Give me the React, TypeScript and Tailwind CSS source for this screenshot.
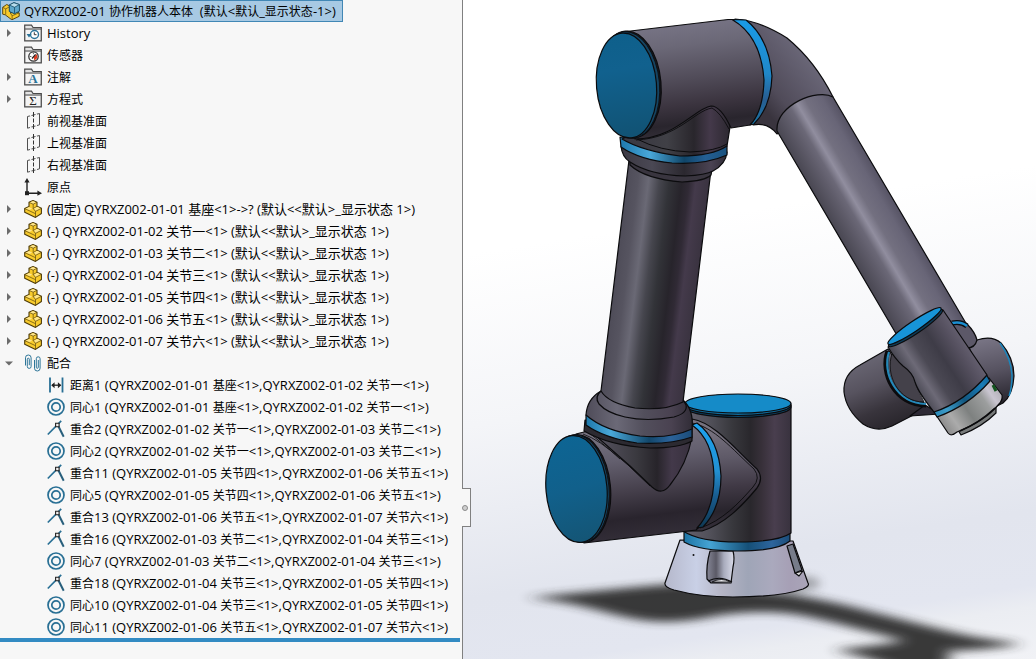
import React from "react";

type IconProps = { children: React.ReactNode };

const Icon = ({ children }: IconProps) => (
  <svg viewBox="0 0 18 18" className="size-[18px] shrink-0" fill="none" aria-hidden="true">
    {children}
  </svg>
);

const Folder = ({ children }: IconProps) => (
  <Icon>
    <path d="M.7 16.8V1.2h6.8l1.5 2.3h8.3v13.3z" fill="#e4e4e4" stroke="#4a4a4a" strokeWidth="1.2" />
    <path d="M1 5h16" stroke="#4a4a4a" />
    <path d="M2 6h14v9.800H2z" fill="#f4f4f4" />
    {children}
  </Icon>
);

const HistoryIcon = () => (
  <Folder>
    <circle cx="10.5" cy="10.5" r="4" fill="#fff" stroke="#2b7399" strokeWidth="1.400" />
    <path d="M10.300 8.300v2.400h2.200" stroke="#333" />
    <path d="M2.600 10h5L5 13.400z" fill="#2b7399" />
  </Folder>
);

const SensorIcon = () => (
  <Folder>
    <circle cx="9.5" cy="10.5" r="4.700" fill="#fff" stroke="#333" strokeWidth="1.300" />
    <path d="M9.500 11l3.500-3 .4 4-3 2.400z" fill="#df3b20" />
    <path d="M8 12.500l3.600-4.200" stroke="#222" strokeWidth="1.200" />
    <path d="M6 10.500h1.400M9.400 6.800V8.200" stroke="#666" />
  </Folder>
);

const AnnotationIcon = () => (
  <Folder>
    <text x="9" y="15" textAnchor="middle" fill="#2b7399" className="font-['Liberation_Serif',serif] text-[13px] font-bold">
      A
    </text>
  </Folder>
);

const EquationIcon = () => (
  <Folder>
    <text x="9" y="15" textAnchor="middle" fill="#222" className="font-['Liberation_Serif',serif] text-[13px]">
      Σ
    </text>
  </Folder>
);

const PlaneIcon = () => (
  <Icon>
    <path d="M3.500 4.500l12-3v11.300l-12 3.400z" stroke="#4f4f4f" strokeWidth="1" />
    <path d="M9.500 0v18" stroke="#333" strokeDasharray="5 1.500 4 1.500" />
    <path d="M6 3.900l1.500-.4M11.500 2.500l1.500-.4M6 15.500l1.500-.4M11.500 14l1.500-.4" stroke="#f7f7f7" strokeWidth="2" />
  </Icon>
);

const OriginIcon = () => (
  <Icon>
    <path d="M3 15.200V3M3 15.200h12" stroke="#222" strokeWidth="1.400" />
    <path d="M3 0l2.600 4.600H.4zM18 15.200l-4.600-2.600v5.200z" fill="#222" />
    <path d="M1 13.200h4v4H1z" fill="#222" />
  </Icon>
);

const PartIcon = () => (
  <Icon>
    <path
      d="M5 2.300L9 .6l4 1.600v4l4.400 2v5.300l-5.900 3.900L.7 12.200V8.600L5 6.600z"
      fill="#f8cb2c"
      stroke="#4d3b08"
      strokeWidth="1.100"
      strokeLinejoin="round"
    />
    <path d="M5.500 2.400L9 1.100l3.300 1.300-3.200 1.500zM9.400 8.500l3.800-1.700 3.600 1.600-5 2.500zM1.500 8.700L5 7l3.300 1.700L5.400 10z" fill="#ffe68a" />
    <path d="M5 2.400l4.200 1.800L13 2.200M9.200 4.200v4.300l2.300 2.900 5.900-3.100M11.500 11.400v5.800M.9 8.700l10.600 5" stroke="#5b470e" strokeWidth=".7" />
    <path d="M9.200 8.500L13 6.200" stroke="#5b470e" strokeWidth=".7" />
  </Icon>
);

const AssemblyIcon = () => (
  <Icon>
    <path
      d="M.7 5.300l4-2.800 3.800 1.800v6.900l3.700-1.900 5 1.600v3.400l-7.400 3.500-6.600-5-2.500-.6z"
      fill="#f8cb2c"
      stroke="#5b470e"
      strokeLinejoin="round"
    />
    <path d="M.7 5.300l3 1.600 4.800-2.600M3.700 6.900v5.700M8.500 11.200l1.600 2.600 7-3M10.100 13.800v4" stroke="#5b470e" strokeWidth=".7" />
    <path d="M7.300 3L11.900.7l5.500 1.900v6.600l-4.900 2.600-5.200-2.300z" fill="#5ea7cb" stroke="#174c66" strokeLinejoin="round" />
    <path d="M7.300 3l5.200 2.300 4.900-2.700L11.900.7z" fill="#b8dcec" stroke="#174c66" strokeWidth=".8" />
    <path d="M12.500 5.300v6.300" stroke="#174c66" strokeWidth=".8" />
  </Icon>
);

const MatesIcon = () => (
  <Icon>
    <path d="M1.500 11.500V3.800a2.800 2.800 0 015.600 0v8.700a1.900 1.900 0 01-3.800 0V5.200a1 1 0 012 0v6" stroke="#2e7699" />
    <path d="M10.500 6v8.200a2.800 2.800 0 005.600 0V4.700a1.900 1.900 0 00-3.800 0v8.600a1 1 0 002 0V6" stroke="#2e7699" />
  </Icon>
);

const DistanceIcon = () => (
  <Icon>
    <path d="M3 1.500v15M15.500 1.500v15" stroke="#286f94" strokeWidth="1.800" />
    <path d="M5 9.200h8.500" stroke="#222" strokeWidth="1.300" />
    <path d="M4.200 9.200l3.400-3v6zM14.300 9.200l-3.400-3v6z" fill="#222" />
  </Icon>
);

const ConcentricIcon = () => (
  <Icon>
    <circle cx="9" cy="9" r="8" stroke="#286f94" strokeWidth="1.700" />
    <circle cx="9" cy="9" r="4.200" stroke="#286f94" strokeWidth="1.700" />
  </Icon>
);

const CoincidentIcon = () => (
  <Icon>
    <path d="M.8 14.500L14.200.8" stroke="#286f94" strokeWidth="1.700" />
    <path d="M10.500 4.500l6.200 12.200" stroke="#285f7c" strokeWidth="2" />
    <path d="M8.600 3.200h3.500v3.500H8.600z" fill="#eee" stroke="#222" strokeWidth="1.100" />
  </Icon>
);

const folders = [
  { label: "History", icon: HistoryIcon, expandable: true },
  { label: "传感器", icon: SensorIcon, expandable: false },
  { label: "注解", icon: AnnotationIcon, expandable: true },
  { label: "方程式", icon: EquationIcon, expandable: true },
  { label: "前视基准面", icon: PlaneIcon, expandable: false },
  { label: "上视基准面", icon: PlaneIcon, expandable: false },
  { label: "右视基准面", icon: PlaneIcon, expandable: false },
  { label: "原点", icon: OriginIcon, expandable: false },
];

const parts = [
  "(固定) QYRXZ002-01-01 基座<1>->? (默认<<默认>_显示状态 1>)",
  "(-) QYRXZ002-01-02 关节一<1> (默认<<默认>_显示状态 1>)",
  "(-) QYRXZ002-01-03 关节二<1> (默认<<默认>_显示状态 1>)",
  "(-) QYRXZ002-01-04 关节三<1> (默认<<默认>_显示状态 1>)",
  "(-) QYRXZ002-01-05 关节四<1> (默认<<默认>_显示状态 1>)",
  "(-) QYRXZ002-01-06 关节五<1> (默认<<默认>_显示状态 1>)",
  "(-) QYRXZ002-01-07 关节六<1> (默认<<默认>_显示状态 1>)",
];

const mates = [
  { icon: DistanceIcon, label: "距离1 (QYRXZ002-01-01 基座<1>,QYRXZ002-01-02 关节一<1>)" },
  { icon: ConcentricIcon, label: "同心1 (QYRXZ002-01-01 基座<1>,QYRXZ002-01-02 关节一<1>)" },
  { icon: CoincidentIcon, label: "重合2 (QYRXZ002-01-02 关节一<1>,QYRXZ002-01-03 关节二<1>)" },
  { icon: ConcentricIcon, label: "同心2 (QYRXZ002-01-02 关节一<1>,QYRXZ002-01-03 关节二<1>)" },
  { icon: CoincidentIcon, label: "重合11 (QYRXZ002-01-05 关节四<1>,QYRXZ002-01-06 关节五<1>)" },
  { icon: ConcentricIcon, label: "同心5 (QYRXZ002-01-05 关节四<1>,QYRXZ002-01-06 关节五<1>)" },
  { icon: CoincidentIcon, label: "重合13 (QYRXZ002-01-06 关节五<1>,QYRXZ002-01-07 关节六<1>)" },
  { icon: CoincidentIcon, label: "重合16 (QYRXZ002-01-03 关节二<1>,QYRXZ002-01-04 关节三<1>)" },
  { icon: ConcentricIcon, label: "同心7 (QYRXZ002-01-03 关节二<1>,QYRXZ002-01-04 关节三<1>)" },
  { icon: CoincidentIcon, label: "重合18 (QYRXZ002-01-04 关节三<1>,QYRXZ002-01-05 关节四<1>)" },
  { icon: ConcentricIcon, label: "同心10 (QYRXZ002-01-04 关节三<1>,QYRXZ002-01-05 关节四<1>)" },
  { icon: ConcentricIcon, label: "同心11 (QYRXZ002-01-06 关节五<1>,QYRXZ002-01-07 关节六<1>)" },
];

// Chinese glyphs are set one step smaller than the Latin ones
const Label = ({ text }: { text: string }) => (
  <span className="whitespace-pre">
    {text.split(/([\u4e00-\u9fff]+)/).map((run, i) =>
      i % 2 ? (
        <span key={i} className="text-xs/none">
          {run}
        </span>
      ) : (
        run
      )
    )}
  </span>
);

const Expander = ({ open = false, name }: { open?: boolean; name: string }) => (
  <button type="button" aria-label={name} aria-expanded={open} className="flex h-[22px] w-6 shrink-0 items-center pl-1">
    <svg viewBox="0 0 10 10" className="size-[10px]" fill="#6b6b6b">
      {open ? <path d="M1 3.500h8L5 7.500z" /> : <path d="M3 1v8l4-4z" />}
    </svg>
  </button>
);

const FeatureTree = () => (
  <nav aria-label="FeatureManager">
    <button
      type="button"
      className="flex h-[22px] w-[343px] items-center gap-1 border border-[#4187b5] bg-[#a7c9e3] pl-px"
    >
      <AssemblyIcon />
      <Label text="QYRXZ002-01 协作机器人本体  (默认<默认_显示状态-1>)" />
    </button>
    <ul>
      {folders.map(({ label, icon: RowIcon, expandable }) => (
        <li key={label} className="flex h-[22px] items-center">
          {expandable ? <Expander name={label} /> : <span className="w-6" />}
          <RowIcon />
          <span className="pl-[5px]">
            <Label text={label} />
          </span>
        </li>
      ))}
      {parts.map((label) => (
        <li key={label} className="flex h-[22px] items-center">
          <Expander name={label} />
          <PartIcon />
          <span className="pl-[5px] whitespace-pre">{label}</span>
        </li>
      ))}
      <li>
        <div className="flex h-[22px] items-center">
          <Expander open name="配合" />
          <MatesIcon />
          <span className="pl-[5px]">
            <Label text="配合" />
          </span>
        </div>
        <ul>
          {mates.map(({ icon: MateIcon, label }) => (
            <li key={label} className="flex h-[22px] items-center gap-[5px] pl-[47px]">
              <MateIcon />
              <Label text={label} />
            </li>
          ))}
        </ul>
      </li>
    </ul>
    <div className="mr-[2px] h-1 bg-[#338bc3]" />
  </nav>
);

const Gradient = ({ id, from, to, stops }: { id: string; from: number[]; to: number[]; stops: [number, string][] }) => (
  <linearGradient id={id} gradientUnits="userSpaceOnUse" x1={from[0]} y1={from[1]} x2={to[0]} y2={to[1]}>
    {stops.map(([offset, color]) => (
      <stop key={offset} offset={offset} stopColor={color} />
    ))}
  </linearGradient>
);

const Robot = () => (
  <svg
    viewBox="463 0 573 659"
    preserveAspectRatio="xMidYMid meet"
    className="absolute inset-0 size-full"
    role="img"
    aria-label="协作机器人"
  >
    <defs>
      <filter id="soft" x="-10%" y="-50%" width="120%" height="200%">
        <feGaussianBlur stdDeviation="8 4" />
      </filter>
      <filter id="softer" x="-50%" y="-50%" width="200%" height="200%">
        <feGaussianBlur stdDeviation="5" />
      </filter>
      <Gradient id="shoulder" from={[684, 22]} to={[698, 136]} stops={[[0, "#777485"], [0.2, "#6b6877"], [0.5, "#504b58"], [0.72, "#3b343f"], [0.88, "#29252d"], [1, "#35313a"]]} />
      <Gradient id="elbow" from={[765, 110]} to={[825, 60]} stops={[[0, "#39343e"], [0.25, "#504b59"], [0.6, "#5f5b6b"], [1, "#706d7e"]]} />
      <Gradient id="forearm" from={[777, 131]} to={[833, 98]} stops={[[0, "#494752"], [0.25, "#605d6b"], [0.36, "#6b6877"], [0.48, "#918e9f"], [0.62, "#737080"], [0.85, "#686577"], [1, "#575465"]]} />
      <Gradient id="arm" from={[614, 280]} to={[696, 290]} stops={[[0, "#4e4c58"], [0.14, "#565460"], [0.27, "#6a6975"], [0.4, "#46464e"], [0.52, "#323338"], [0.67, "#27242b"], [0.76, "#302a35"], [0.84, "#443a4b"], [1, "#3a3340"]]} />
      <Gradient id="neck" from={[640, 130]} to={[730, 130]} stops={[[0, "#3b3a43"], [0.3, "#404046"], [0.6, "#29262c"], [0.78, "#44394a"], [1, "#2c2830"]]} />
      <Gradient id="collar" from={[584, 0]} to={[693, 0]} stops={[[0, "#4d4a57"], [0.3, "#6b6977"], [0.55, "#524f5c"], [0.8, "#4a4251"], [1, "#302c36"]]} />
      <Gradient id="collarTop" from={[620, 0]} to={[727, 0]} stops={[[0, "#3b3842"], [0.3, "#4a4854"], [0.6, "#2b282f"], [0.85, "#4a4353"], [1, "#302c36"]]} />
      <Gradient id="ringTop" from={[620, 0]} to={[727, 0]} stops={[[0, "#1d78ad"], [0.28, "#49a7d8"], [0.6, "#104568"], [0.8, "#245f94"], [1, "#1a527f"]]} />
      <Gradient id="ringMid" from={[585, 0]} to={[692, 0]} stops={[[0, "#1c76a9"], [0.24, "#4aa8d8"], [0.6, "#12476b"], [0.8, "#2c639a"], [1, "#1b4c78"]]} />
      <Gradient id="ringBase" from={[684, 0]} to={[791, 0]} stops={[[0, "#1d74a5"], [0.24, "#45a3d3"], [0.6, "#155078"], [0.82, "#2d659d"], [1, "#1a4b77"]]} />
      <Gradient id="ringSide" from={[0, 22]} to={[0, 125]} stops={[[0, "#1a9be6"], [0.5, "#2087c8"], [0.75, "#285d91"], [1, "#1976a7"]]} />
      <Gradient id="ringLow" from={[0, 425]} to={[0, 527]} stops={[[0, "#1da2ee"], [0.45, "#2390d2"], [0.7, "#195c8f"], [1, "#0f3954"]]} />
      <Gradient id="cap" from={[600, 0]} to={[610, 140]} stops={[[0, "#0b5e88"], [0.5, "#11618e"], [1, "#115273"]]} />
      <Gradient id="capLow" from={[560, 436]} to={[580, 543]} stops={[[0, "#0d6594"], [0.5, "#11608b"], [1, "#145575"]]} />
      <Gradient id="hip" from={[646, 430]} to={[660, 536]} stops={[[0, "#75717f"], [0.25, "#635f6e"], [0.55, "#453f4b"], [0.8, "#29242d"], [1, "#332e38"]]} />
      <Gradient id="saddle" from={[720, 430]} to={[728, 525]} stops={[[0, "#77727f"], [0.3, "#5e5967"], [0.6, "#403945"], [0.85, "#28242c"], [1, "#332e38"]]} />
      <Gradient id="vee" from={[600, 0]} to={[692, 0]} stops={[[0, "#54515e"], [0.4, "#3a393f"], [0.62, "#27242a"], [0.78, "#43394a"], [1, "#37303d"]]} />
      <Gradient id="column" from={[683, 0]} to={[792, 0]} stops={[[0, "#65616e"], [0.25, "#515059"], [0.45, "#38383d"], [0.62, "#29272c"], [0.72, "#373039"], [0.84, "#493e4e"], [1, "#37313d"]]} />
      <Gradient id="base" from={[665, 0]} to={[808, 0]} stops={[[0, "#b5b8cb"], [0.22, "#c9d0e6"], [0.4, "#b5b5c5"], [0.58, "#9fa5b7"], [0.75, "#aaa9bd"], [0.88, "#a69fb5"], [1, "#aaa5b8"]]} />
      <Gradient id="slot" from={[707, 0]} to={[733, 0]} stops={[[0, "#858696"], [0.35, "#5b5a66"], [0.65, "#a9acbd"], [1, "#d5d7e5"]]} />
      <Gradient id="wristLeft" from={[860, 362]} to={[888, 430]} stops={[[0, "#686572"], [0.35, "#57535f"], [0.7, "#38343c"], [1, "#28252b"]]} />
      <Gradient id="wristRight" from={[985, 338]} to={[1000, 405]} stops={[[0, "#797585"], [0.5, "#565260"], [1, "#25222a"]]} />
      <Gradient id="wrist" from={[910, 379]} to={[965, 343]} stops={[[0, "#4a4954"], [0.18, "#6d6a77"], [0.35, "#4b4954"], [0.6, "#3e3c47"], [0.85, "#55505f"], [1, "#625d6d"]]} />
      <Gradient id="wristRing" from={[935, 415]} to={[989, 378]} stops={[[0, "#2988b6"], [0.2, "#3d9bc8"], [0.5, "#12577f"], [0.85, "#197db8"], [1, "#156a9e"]]} />
      <Gradient id="flange" from={[942, 426]} to={[996, 388]} stops={[[0, "#8a8a8a"], [0.2, "#ababab"], [0.45, "#7e8180"], [0.75, "#9c9e9e"], [0.88, "#c9c5d0"], [1, "#b7b4bc"]]} />
    </defs>

    {/* floor shadow */}
    <g fill="#303132">
      <path
        filter="url(#soft)"
        opacity=".96"
        d="M527 598C585 592 640 586 690 583L770 592C810 596 850 606 876 613C920 624 950 632 975 637Q1000 641 1022 644Q980 651 945 651Q960 662 930 672L895 668Q865 656 834 650Q880 645 905 641C870 632 845 625 810 617Q770 608 720 615Q680 624 650 621C610 617 585 602 527 598Z"
      />
      <path filter="url(#softer)" opacity=".4" d="M770 577h40q16 5 8 10l-30 8z" />
    </g>

    <g stroke="#0b0b0d" strokeWidth="1.200" strokeLinejoin="round">
      {/* base cone */}
      <path d="M680 540L665 583Q664 587 674 590Q700 597 733 597Q780 597 803 589Q810 586 808 583L793 541Z" fill="url(#base)" />
      <path d="M710 551Q706 565 707 579L711 583H731L733 567Q735 558 733 551Z" fill="url(#slot)" />
      <path d="M708 581q12-6 24 1" fill="none" />
      <path d="M712 582q10-5 18 0z" fill="#e9e9ee" strokeWidth=".8" />
      <path d="M787 546L795 573l7-3-9-26z" fill="#777c8a" />
      <path d="M795 573l8-2-4 5z" fill="#ddd" />
      <circle cx="693.5" cy="555" r="1" fill="#111" stroke="none" />

      {/* base column */}
      <path d="M684 531V542Q700 551 738 551Q778 551 790 541V531Z" fill="url(#ringBase)" />
      <path d="M683 405V531Q700 542 738 542Q778 542 791 533V405Z" fill="url(#column)" />
      <ellipse cx="738" cy="407" rx="53" ry="10.5" fill="#0d4669" />
      <ellipse cx="738" cy="405" rx="53" ry="10.5" fill="#116997" />
      <ellipse cx="738" cy="403.5" rx="53" ry="9.5" fill="#158bc8" />

      {/* hip joint */}
      <path d="M692 419C715 423 735 449 757 469Q764 478 757 488C742 506 725 524 702 531L682 531Z" fill="url(#saddle)" />
      <path d="M692 423C714 427 732 449 754 469Q761 478 753 487C739 503 722 521 700 528" fill="none" strokeWidth=".9" />
      <path d="M576 434L600 428L692 424Q714 439 718 470Q718 510 696 530L680 532L584 543Z" fill="url(#hip)" />
      <path d="M692 425Q713 440 714 476Q714 510 697 528L703 527Q721 508 721 476Q719 439 697 423Z" fill="url(#ringLow)" />
      <path d="M596 436L630 466L652 487Q662 496 670 485Q687 464 692 437Z" fill="url(#vee)" />
      <path d="M588 432Q602 443 628 465L650 486" fill="none" strokeWidth=".9" />
      <path d="M583 434Q600 440 620 459" fill="none" strokeWidth=".8" />
      <ellipse cx="580" cy="488.5" rx="30.5" ry="54" fill="#191a20" transform="rotate(-5 580 488.5)" />
      <ellipse cx="578.5" cy="488.7" rx="30.5" ry="54" fill="#174765" strokeWidth=".8" transform="rotate(-5 578.5 488.7)" />
      <ellipse cx="576.5" cy="489" rx="30.5" ry="53.5" fill="url(#capLow)" transform="rotate(-5 576.5 489)" />

      {/* lower arm collar */}
      <path d="M585 420L584 431Q610 446 650 448Q680 448 692 441V428Z" fill="#2c2a31" />
      <path d="M586 415V425Q604 438 637 443Q670 445 692 437V426Z" fill="url(#ringMid)" />
      <path d="M601 391Q587 399 586 415Q604 431 640 436Q670 439 692 429Q694 410 683 400Z" fill="url(#collar)" />
      <path d="M601 391Q594 397 599 404Q607 413 625 417Q647 422 674 417Q688 413 686 405L683 400" fill="none" />

      {/* upper arm tube */}
      <path d="M629 160L601 391Q608 403 635 408Q665 411 683 402L711 170Z" fill="url(#arm)" />

      {/* upper arm collar */}
      <path d="M630 160V165Q645 179 682 182Q705 181 711 175L713 165Z" fill="#39353f" />
      <path d="M621 146Q622 157 630 162Q650 175 685 176Q706 175 713 171Q726 164 727 152Z" fill="url(#collarTop)" />
      <path d="M620 137L621 147Q640 160 672 163Q705 165 727 155V146Z" fill="url(#ringTop)" />
      <path d="M628 136Q640 132 656 128L704 100L726 104L730 127L727 146Q712 156 680 156Q642 151 622 139Z" fill="url(#neck)" />
      <path d="M637 139Q660 151 690 152Q716 151 727 144" fill="none" strokeWidth="1" />

      {/* elbow and forearm */}
      <path d="M735 19Q758 20 787 38Q815 61 833 97L815 112L777 134Q768 122 753 125Z" fill="url(#elbow)" />
      <path d="M777 131L898 337L967 325L833 97C818 88 775 105 777 131Z" fill="url(#forearm)" />

      {/* shoulder joint */}
      <path d="M622 32L728 19.500H735Q764 35 768 76Q768 112 750 125L731 128Q721 106 711 106C695 108 675 139 635 139Z" fill="url(#shoulder)" />
      <path d="M732 19.500Q761 36 764 80Q763 112 750 125L754 124Q771 107 772 76Q769 38 746 20Z" fill="url(#ringSide)" />
      <path d="M636 140C678 138 694 111 712 108Q720 112 729 129" fill="none" strokeWidth=".9" />
      <ellipse cx="630" cy="84.500" rx="31" ry="53.500" fill="#18191e" transform="rotate(-5 630 84.500)" />
      <ellipse cx="628.5" cy="85" rx="31" ry="53.500" fill="#164461" strokeWidth=".8" transform="rotate(-5 628.5 85)" />
      <ellipse cx="626.5" cy="85.500" rx="30" ry="52.500" fill="url(#cap)" transform="rotate(-5 626.5 85.500)" />

      {/* wrist, rear */}
      <path d="M968 345L977 340Q992 335 1001 343Q1014 358 1014 376Q1013 395 1003 403L995 407Z" fill="url(#wristRight)" />
      <path d="M1000 343Q1011 358 1012 375Q1012 388 1009 396" fill="none" stroke="#1a86bd" strokeWidth="1.500" />
      <path d="M950 324L967 324Q975 332 977 340Q975 348 967 348Z" fill="#5c5868" />
      <path d="M952 323Q961 321 967 326" fill="none" strokeWidth="5" />
      <path d="M952 323Q961 321 967 326" fill="none" stroke="#1b8ed0" strokeWidth="2.500" />
      <path d="M888 349L860 365Q843 374 844 392Q846 410 863 424Q877 433 892 426L927 408Z" fill="url(#wristLeft)" />
      <path d="M910 416L925 405L940 414Z" fill="#2e2a35" />
      <path d="M888 351C880 373 895 405 926 405" fill="none" strokeWidth="5" />
      <path d="M889 352C882 373 896 403 926 404" fill="none" stroke="#2588b8" strokeWidth="2.200" />
      <path d="M892 354Q900 358 914 376Q917 390 924 402C898 402 885 374 892 354Z" fill="#44414a" strokeWidth=".8" />

      {/* wrist, front */}
      <path d="M958 430L961 435Q982 427 996 413L996 406Z" fill="#777a7a" />
      <path d="M936 415L948 433Q951 437 957 432Q985 421 999 404Q1003 400 1002 395L989 378Z" fill="url(#flange)" />
      <path d="M933 410L937 417Q968 406 990 381L986 374Z" fill="url(#wristRing)" />
      <path d="M888 347Q895 359 903 366Q913 373 915 382Q918 392 934 412Q964 402 987 375L943 310Z" fill="url(#wrist)" />
      <ellipse cx="915.5" cy="328" rx="32.500" ry="5.500" fill="#0d3d5a" transform="rotate(-34 915.5 328)" />
      <ellipse cx="914.5" cy="326" rx="32" ry="5" fill="#1794d8" transform="rotate(-34 914.5 326)" />
      <path d="M960 431q19-8 35-23" fill="none" strokeWidth="1.500" />
      <path d="M993 385l3 6" stroke="#14551f" strokeWidth="3" />
    </g>
  </svg>
);

export default function App() {
  return (
    <div className="flex min-h-screen overflow-hidden bg-[#f7f7f7] font-['Open_Sans','Noto_Sans_CJK_SC',sans-serif] text-[13px]/none text-black">
      <aside className="relative z-10 w-[463px] shrink-0 border-r border-[#808080]">
        <FeatureTree />
        <button
          type="button"
          aria-label="Collapse panel"
          className="absolute top-[488px] left-full flex h-[39px] w-[9px] items-center border border-l-0 border-[#808080] bg-[#f7f7f7]"
        >
          <span className="size-[6px] rounded-full border border-[#8c8c8c] bg-[#cfcfcf]" />
        </button>
      </aside>
      <main className="relative flex-1 bg-[linear-gradient(171deg,#ffffff_34%,#f4f5f8_57%,#e2e5ee_80%,#e3e6f0_90%,#ebedf2_93%,#f1f2f6_100%)]">
        <Robot />
      </main>
    </div>
  );
}
